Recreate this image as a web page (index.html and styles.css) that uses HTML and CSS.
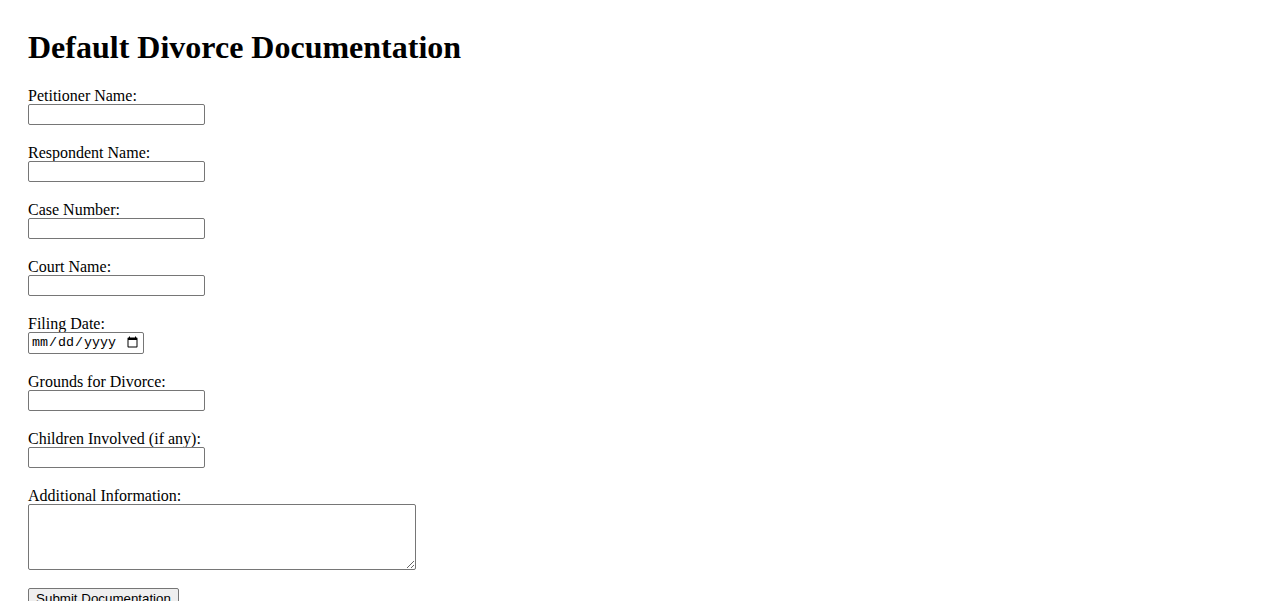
FILE: index.html
```html
<!DOCTYPE html>
<html lang="en">
<head>
<meta charset="utf-8">
<title>Default Divorce Documentation</title>
<link rel="stylesheet" href="styles.css">
</head>
<body>
<main class="page">
  <h1 class="title">Default Divorce Documentation</h1>
  <form class="doc-form">
    <div class="field">
      <label class="field-label" for="petitioner">Petitioner Name:</label>
      <input class="text-input" type="text" id="petitioner">
    </div>
    <div class="field">
      <label class="field-label" for="respondent">Respondent Name:</label>
      <input class="text-input" type="text" id="respondent">
    </div>
    <div class="field">
      <label class="field-label" for="case">Case Number:</label>
      <input class="text-input" type="text" id="case">
    </div>
    <div class="field">
      <label class="field-label" for="court">Court Name:</label>
      <input class="text-input" type="text" id="court">
    </div>
    <div class="field">
      <label class="field-label" for="filing">Filing Date:</label>
      <input class="date-input" type="date" id="filing">
    </div>
    <div class="field">
      <label class="field-label" for="grounds">Grounds for Divorce:</label>
      <input class="text-input" type="text" id="grounds">
    </div>
    <div class="field">
      <label class="field-label" for="children">Children Involved (if any):</label>
      <input class="text-input" type="text" id="children">
    </div>
    <div class="field">
      <label class="field-label" for="info">Additional Information:</label>
      <textarea class="text-area" id="info"></textarea>
    </div>
    <button class="submit-btn" type="submit">Submit Documentation</button>
  </form>
</main>
</body>
</html>
```
FILE: styles.css
```css
html, body {
  margin: 0;
  padding: 0;
  background: #ffffff;
}

body {
  font-family: "Liberation Serif", "Times New Roman", serif;
  font-size: 16px;
  color: #000000;
}

.page {
  padding: 0 28px;
}

.title {
  margin: 0 0 20px;
  padding-top: 29px;
  font-size: 32px;
  line-height: 37px;
  font-weight: bold;
}

.doc-form {
  display: flex;
  flex-direction: column;
  align-items: flex-start;
}

.field {
  display: flex;
  flex-direction: column;
  align-items: flex-start;
  margin-bottom: 18px;
}

.field-label {
  display: block;
  padding-top: 2px;
  line-height: 16px;
}

.text-input,
.date-input,
.text-area,
.submit-btn {
  box-sizing: border-box;
  margin: 0;
  border: 1px solid #767676;
  border-radius: 2px;
  background: #ffffff;
  color: #000000;
}

.text-input {
  width: 177px;
  height: 21px;
  padding: 1px 2px;
  font-family: "Liberation Sans", Arial, sans-serif;
  font-size: 13.333px;
}

.date-input {
  width: 116px;
  height: 22px;
  padding: 1px 2px;
  font-family: "Liberation Mono", "Courier New", monospace;
  font-size: 13.333px;
}

.text-area {
  width: 388px;
  height: 66px;
  padding: 2px;
  font-family: "Liberation Mono", monospace;
  font-size: 13.333px;
}

.submit-btn {
  width: 151px;
  height: 21px;
  padding: 1px 6px;
  background: #efefef;
  font-family: "Liberation Sans", Arial, sans-serif;
  font-size: 13.333px;
  line-height: 17px;
  white-space: nowrap;
}
```
